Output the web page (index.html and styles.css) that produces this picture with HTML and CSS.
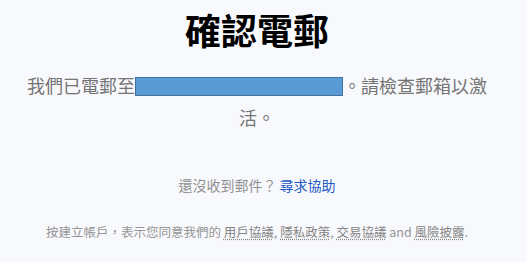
FILE: index.html
```html
<!DOCTYPE html>
<html>
	<head>
		<title>確認電郵</title>
		<meta charset="utf-8">
		<meta name="viewport" content="width=device-width,initial-scale=1.0">
		<link rel="stylesheet" href="styles.css">
	</head>
	<body>
		<div class="page">
			<h1 class="title">確認電郵</h1>
			<p class="message">我們已電郵至<span class="masked"></span>。請檢查郵箱以激活。</p>
			<p class="help">還沒收到郵件？ <a href="#" class="link">尋求協助</a></p>
			<p class="terms">按建立帳戶，表示您同意我們的 <a href="#" class="term">用戶協議</a>, <a href="#" class="term">隱私政策</a>, <a href="#" class="term">交易協議</a> and <a href="#" class="term">風險披露</a>.</p>
		</div>
	</body>
</html>
```

FILE: styles.css
```css
html,body{margin:0;padding:0;background:#f8f9fc;font-family:"Noto Sans CJK TC","Liberation Sans",sans-serif;}
.page{width:470px;margin-left:22px;text-align:center;}

.title{margin:0;padding-top:7px;font-size:36px;line-height:44px;font-weight:bold;color:#000;}

.message{margin:18px 0 0 0;font-size:18px;line-height:32px;color:#747474;}
.masked{display:inline-block;width:206px;height:17px;border:1px solid #41719c;background:#5b9bd5;vertical-align:-3px;}

.help{margin:42px 0 0 0;font-size:14px;line-height:20px;color:#909090;}
.link{color:#1e5bc6;text-decoration:none;}

.terms{margin:28px 0 0 0;font-size:12.5px;line-height:18px;color:#959595;}
.term{color:#858585;text-decoration:underline dotted;text-underline-offset:2px;}
```
